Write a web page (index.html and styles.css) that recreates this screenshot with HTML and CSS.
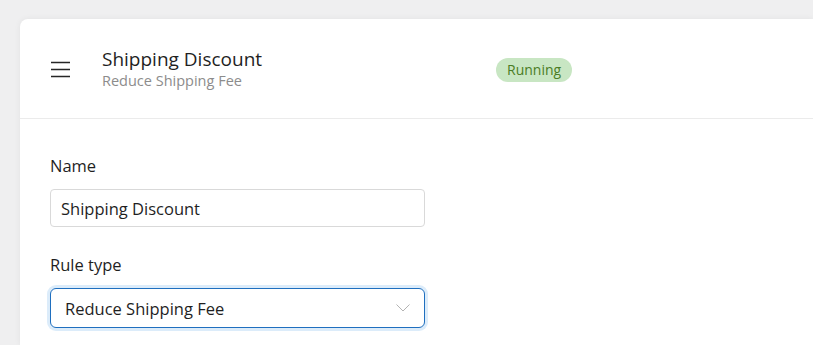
FILE: index.html
```html
<!DOCTYPE html>
<html lang="en">
<head>
    <meta charset="UTF-8">
    <meta name="viewport" content="width=device-width, initial-scale=1.0">
    <title>Shipping Discount</title>
    <link rel="stylesheet" href="styles.css">
</head>
<body>
    <div class="card">
        <div class="card-header">
            <button type="button" class="menu-btn" aria-label="Menu">
                <svg width="19" height="17" viewBox="0 0 19 17">
                    <path d="M0 1.5h19M0 8.5h19M0 15.5h19" stroke="#262626" stroke-width="1.6" fill="none"/>
                </svg>
            </button>
            <div class="title-block">
                <h1>Shipping Discount</h1>
                <p class="subtitle">Reduce Shipping Fee</p>
            </div>
            <span class="badge">Running</span>
        </div>

        <form class="card-body">
            <label for="name">Name</label>
            <input type="text" id="name" name="name" value="Shipping Discount">

            <label for="ruleType">Rule type</label>
            <div class="select-wrap">
                <select id="ruleType" name="ruleType">
                    <option value="shipping">Reduce Shipping Fee</option>
                    <option value="order">Order Discount</option>
                </select>
                <svg class="chevron" width="14" height="8" viewBox="0 0 14 8">
                    <path d="M0.5 0.5L7 7L13.5 0.5" stroke="#b3b3b3" stroke-width="1" fill="none"/>
                </svg>
            </div>
        </form>
    </div>
</body>
</html>
```

FILE: styles.css
```css
body {
    font-family: 'Open Sans', 'Noto Sans', sans-serif;
    margin: 0;
    padding: 19px 0 0 20px;
    background: #efeff0;
    color: #1f1f1f;
    height: 345px;
    box-sizing: border-box;
    overflow: hidden;
}

.card {
    background: #fff;
    border-radius: 8px 0 0 0;
    box-shadow: 0 0 6px rgba(0, 0, 0, 0.06);
    height: 326px;
}

.card-header {
    display: flex;
    align-items: center;
    height: 100px;
    box-sizing: border-box;
    padding-left: 31px;
    border-bottom: 1px solid #ebebeb;
}

.menu-btn {
    border: none;
    background: none;
    padding: 0;
    width: 19px;
    height: 17px;
    display: flex;
    margin-top: 1px;
}

.title-block {
    margin-left: 32px;
    width: 394px;
}

h1 {
    margin: 0;
    font-size: 19px;
    font-weight: 400;
    line-height: 24px;
    color: #1f1f1f;
}

.subtitle {
    margin: 0;
    font-size: 14.5px;
    line-height: 20px;
    color: #8c8c8c;
}

.badge {
    background: #c8e6c3;
    color: #4b7d25;
    font-size: 14px;
    line-height: 24px;
    padding: 0 11px;
    border-radius: 12px;
    margin-top: 2px;
}

.card-body {
    display: flex;
    flex-direction: column;
    align-items: flex-start;
    padding: 36px 30px 0;
}

label {
    font-size: 16.5px;
    line-height: 22px;
    margin-bottom: 12px;
}

input, select {
    font-family: inherit;
    font-size: 16.5px;
    color: #1f1f1f;
    box-sizing: border-box;
    width: 375px;
    background: #fff;
    outline: none;
}

input {
    height: 38px;
    padding: 0 10px;
    border: 1px solid #d9d9d9;
    border-radius: 4px;
    margin-bottom: 27px;
}

.select-wrap {
    position: relative;
}

select {
    appearance: none;
    height: 40px;
    padding: 0 14px;
    border: 1px solid #1f6fbf;
    border-radius: 6px;
    box-shadow: 0 0 0 3px #dcecfa;
}

.chevron {
    position: absolute;
    right: 15px;
    top: 16px;
    pointer-events: none;
}
```
